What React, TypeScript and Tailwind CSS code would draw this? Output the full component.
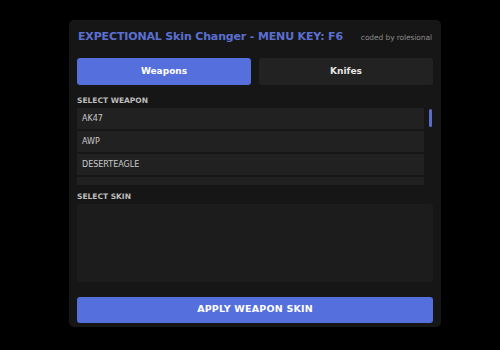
import React from 'react'

const weapons = ['AK47', 'AWP', 'DESERTEAGLE', '']

export default function App() {
  return (
    <div
      className="w-[500px] h-[350px] bg-black pt-[20px] pl-[69px]"
      style={{ fontFamily: '"DejaVu Sans", "Open Sans", sans-serif' }}
    >
      <div className="w-[372px] h-[307px] bg-[#161616] rounded-[5px] flex flex-col px-[8px]">
        {/* header */}
        <div className="h-[34px] flex items-center justify-between pl-[1px] pr-[1px] pt-[1px] whitespace-nowrap">
          <span className="text-[11px] font-bold text-[#5b6fd2] tracking-[-0.15px]">
            EXPECTIONAL Skin Changer - MENU KEY: F6
          </span>
          <span className="text-[7.5px] text-[#8a8a8a] tracking-[-0.1px]">coded by rolesional</span>
        </div>

        {/* tabs */}
        <div className="mt-[4px] flex gap-[8px]">
          <button className="flex-1 h-[27px] rounded-[3px] bg-[#5570dd] text-white text-[9px] font-bold">
            Weapons
          </button>
          <button className="flex-1 h-[27px] rounded-[3px] bg-[#222222] text-[#e5e5e5] text-[9px] font-bold">
            Knifes
          </button>
        </div>

        {/* select weapon */}
        <div className="mt-[10px] text-[7.5px] font-bold text-[#bdbdbd]">SELECT WEAPON</div>
        <div className="mt-[2px] flex h-[77px] gap-[3px]">
          <div className="flex-1 overflow-hidden flex flex-col gap-[2px]">
            {weapons.map((w, i) => (
              <div
                key={i}
                className="h-[21px] shrink-0 bg-[#212121] flex items-center pl-[5px] text-[8px] text-[#c9c9c9]"
              >
                {w}
              </div>
            ))}
          </div>
          <div className="w-[6px] flex justify-center pt-[1px]">
            <div className="w-[3px] h-[18px] rounded-full bg-[#5a6cc8]" />
          </div>
        </div>

        {/* select skin */}
        <div className="mt-[6px] text-[7.5px] font-bold text-[#bdbdbd]">SELECT SKIN</div>
        <div className="mt-[1px] h-[78px] bg-[#1c1c1c] rounded-[2px]" />

        {/* apply */}
        <button className="mt-[15px] h-[26px] rounded-[3px] bg-[#5570dd] text-white text-[9.5px] font-bold tracking-[0.2px]">
          APPLY WEAPON SKIN
        </button>
      </div>
    </div>
  )
}
